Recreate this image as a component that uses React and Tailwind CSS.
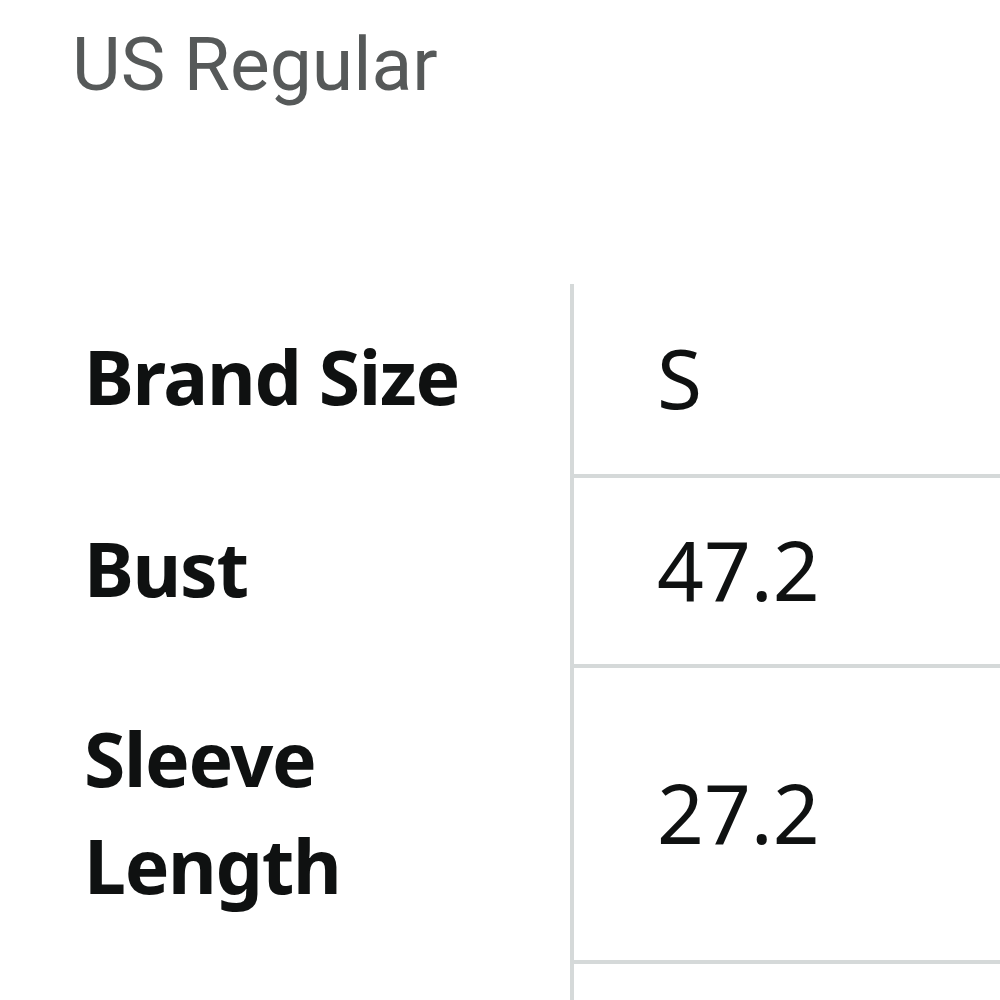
export default function App() {
  const rows = [
    { label: ["Brand Size"], value: "S", h: "h-[194px]" },
    { label: ["Bust"], value: "47.2", h: "h-[190px]" },
    { label: ["Sleeve", "Length"], value: "27.2", h: "h-[296px]" },
    { label: [""], value: "", h: "h-[200px]" },
  ];
  return (
    <div className="w-[1000px] h-[1000px] overflow-hidden bg-white" style={{ fontFamily: '"Noto Sans", sans-serif' }}>
      <div className="h-[284px] pl-[72px] pt-[14px]" style={{ fontFamily: 'Roboto, "Noto Sans", sans-serif' }}>
        <div className="text-[75px] leading-[100px] text-[#565959]">US Regular</div>
      </div>
      <div className="flex flex-col">
        {rows.map((r, i) => (
          <div key={i} className={`flex ${r.h}`}>
            <div className="w-[570px] shrink-0 pl-[84px] pb-[9px] flex flex-col justify-center text-[75px] leading-[107px] font-bold tracking-[-1.3px] text-[#0f1111]">
              {r.label.map((l, j) => (
                <div key={j}>{l}</div>
              ))}
            </div>
            <div className="flex-1 border-l-4 border-b-4 border-[#d5d9d9] pl-[83px] pb-[3px] flex items-center text-[82px] text-[#0f1111]">
              {r.value}
            </div>
          </div>
        ))}
      </div>
    </div>
  );
}
